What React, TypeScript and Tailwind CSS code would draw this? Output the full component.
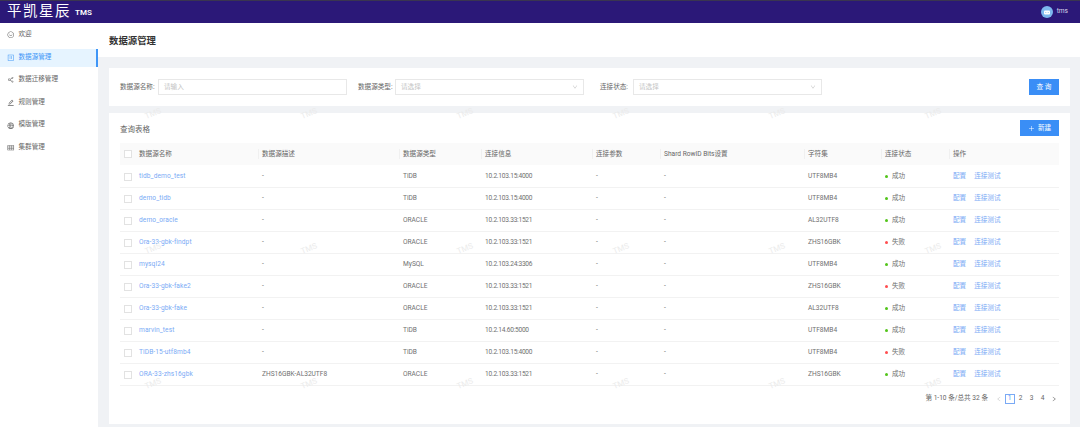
import React from "react";
import {
  AiOutlineSmile,
  AiOutlineProfile,
  AiOutlineEdit,
  AiOutlineGlobal,
  AiOutlineTable,
  AiOutlineDown,
  AiOutlineLeft,
  AiOutlineRight,
  AiOutlinePlus,
  AiOutlineShareAlt,
} from "react-icons/ai";

const font = "font-['Roboto','Noto_Sans_CJK_SC',sans-serif]";

const menu = [
  { label: "欢迎", icon: <AiOutlineSmile /> },
  { label: "数据源管理", icon: <AiOutlineProfile />, active: true },
  { label: "数据迁移管理", icon: <AiOutlineShareAlt /> },
  { label: "规则管理", icon: <AiOutlineEdit /> },
  { label: "模版管理", icon: <AiOutlineGlobal /> },
  { label: "集群管理", icon: <AiOutlineTable /> },
];

const columns = ["数据源名称", "数据源描述", "数据源类型", "连接信息", "连接参数", "Shard RowID Bits设置", "字符集", "连接状态", "操作"];

const rows = [
  ["tidb_demo_test", "-", "TiDB", "10.2.103.15:4000", "UTF8MB4", true],
  ["demo_tidb", "-", "TiDB", "10.2.103.15:4000", "UTF8MB4", true],
  ["demo_oracle", "-", "ORACLE", "10.2.103.33:1521", "AL32UTF8", true],
  ["Ora-33-gbk-findpt", "-", "ORACLE", "10.2.103.33:1521", "ZHS16GBK", false],
  ["mysql24", "-", "MySQL", "10.2.103.24:3306", "UTF8MB4", true],
  ["Ora-33-gbk-fake2", "-", "ORACLE", "10.2.103.33:1521", "ZHS16GBK", false],
  ["Ora-33-gbk-fake", "-", "ORACLE", "10.2.103.33:1521", "AL32UTF8", true],
  ["marvin_test", "-", "TiDB", "10.2.14.60:5000", "UTF8MB4", true],
  ["TiDB-15-utf8mb4", "-", "TiDB", "10.2.103.15:4000", "UTF8MB4", false],
  ["ORA-33-zhs16gbk", "ZHS16GBK-AL32UTF8", "ORACLE", "10.2.103.33:1521", "ZHS16GBK", true],
] as const;

function Checkbox() {
  return <span className="block h-[8px] w-[8px] border border-[#e2e2e2] bg-white" />;
}

function Select({ label, labelWidth }: { label: string; labelWidth: string }) {
  return (
    <div className="flex items-center">
      <span className={`${labelWidth} pt-[1px] text-[6.6px] text-[#666666]`}>{label}</span>
      <div className="flex h-[16px] w-[189px] items-center justify-between border border-[#e8e8e8] px-[5px] text-[6.6px] text-[#c4c4c4]">
        <span className="pt-[1px]">请选择</span>
        <AiOutlineDown className="text-[6px] text-[#c4c4c4]" />
      </div>
    </div>
  );
}

export default function App() {
  return (
    <div className={`${font} relative flex h-[427px] w-[1080px] flex-col overflow-hidden bg-[#f0f2f5]`}>
      <header className="flex h-[23px] shrink-0 items-center justify-between border-t border-[#3a3550] bg-[#2b1878] pl-[7px] pr-[12px] text-white">
        <div className="flex items-center">
          <span className="text-[14.5px] leading-none tracking-[1.5px]">平凯星辰</span>
          <span className="ml-[4px] mt-[1px] text-[8px] font-semibold">TMS</span>
        </div>
        <div className="flex items-center gap-[4px]">
          <svg viewBox="0 0 12 12" className="h-[12px] w-[12px]">
            <circle cx="6" cy="6" r="6" fill="#7db8ee" />
            <rect x="3" y="4.5" width="6" height="4" rx="1" fill="#ffffff" />
            <circle cx="4.8" cy="6.4" r="0.5" fill="#7db8ee" />
            <circle cx="7.2" cy="6.4" r="0.5" fill="#7db8ee" />
          </svg>
          <span className="text-[6.6px] text-[#d8d6e8]">tms</span>
        </div>
      </header>

      <div className="flex min-h-0 flex-1">
        <aside className="w-[98px] shrink-0 bg-white pt-[3px]">
          {menu.map((item) => (
            <div
              key={item.label}
              className={`mb-[4.6px] flex h-[18px] items-center gap-[4px] pl-[7px] text-[6.6px] ${
                item.active ? "border-r-2 border-[#3f96f7] bg-[#e6f4ff] text-[#3f96f7]" : "text-[#666666]"
              }`}
            >
              <span className="text-[7.5px]">{item.icon}</span>
              <span>{item.label}</span>
            </div>
          ))}
        </aside>

        <main className="min-w-0 flex-1">
          <div className="flex h-[34px] items-center bg-white pl-[11px] pt-[2px] text-[9.4px] font-semibold text-[#333333]">数据源管理</div>

          <div className="ml-[11px] mr-[10px] mt-[11px] flex h-[38px] items-center bg-white px-[11px]">
            <div className="flex items-center">
              <span className="w-[38px] pt-[1px] text-[6.6px] text-[#666666]">数据源名称:</span>
              <div className="flex h-[16px] w-[189px] items-center border border-[#e8e8e8] px-[5px] pt-[1px] text-[6.6px] text-[#c4c4c4]">请输入</div>
            </div>
            <div className="ml-[11px]">
              <Select label="数据源类型:" labelWidth="w-[37px]" />
            </div>
            <div className="ml-[16px]">
              <Select label="连接状态:" labelWidth="w-[33px]" />
            </div>
            <button className="ml-auto flex h-[16px] w-[30px] items-center justify-center bg-[#3a8ef6] pt-[1px] text-[6.6px] text-white">查 询</button>
          </div>

          <div className="ml-[11px] mr-[10px] mt-[7px] h-[311px] bg-white px-[11px] pt-[7px]">
            <div className="flex h-[16px] items-center justify-between">
              <span className="pt-[4px] text-[7.5px] text-[#666666]">查询表格</span>
              <button className="flex h-[16px] w-[39px] items-center justify-center gap-[3px] bg-[#3a8ef6] pt-[1px] text-[6.6px] text-white">
                <AiOutlinePlus className="text-[7px]" />
                新建
              </button>
            </div>

            <table className="mt-[7px] w-[939px] table-fixed border-collapse text-left text-[6.6px] text-[#707070]">
              <colgroup>
                <col className="w-[15px]" />
                <col className="w-[123px]" />
                <col className="w-[141px]" />
                <col className="w-[82px]" />
                <col className="w-[111px]" />
                <col className="w-[68px]" />
                <col className="w-[144px]" />
                <col className="w-[77px]" />
                <col className="w-[68px]" />
                <col className="w-[110px]" />
              </colgroup>
              <thead>
                <tr className="h-[22px] bg-[#fafafa]">
                  <th className="pl-[4px] font-normal">
                    <Checkbox />
                  </th>
                  {columns.map((col, i) => (
                    <th key={col} className="relative pl-[4px] pt-[2px] font-normal text-[#666666]">
                      {i > 0 && <span className="absolute left-0 top-[6px] h-[10px] w-px bg-[#f0f0f0]" />}
                      {col}
                    </th>
                  ))}
                  <th />
                </tr>
              </thead>
              <tbody>
                {rows.map(([name, desc, type, conn, charset, ok]) => (
                  <tr key={name} className="h-[22px] border-b border-[#f2f2f2] [&>td]:pt-[2px]">
                    <td className="pl-[4px]">
                      <Checkbox />
                    </td>
                    <td className="pl-[4px] tracking-[0.1px] text-[#7aaaf5]">{name}</td>
                    <td className="pl-[4px]">{desc}</td>
                    <td className="pl-[4px]">{type}</td>
                    <td className="pl-[4px] tracking-[-0.25px]">{conn}</td>
                    <td className="pl-[4px]">-</td>
                    <td className="pl-[4px]">-</td>
                    <td className="pl-[4px]">{charset}</td>
                    <td className="pl-[4px]">
                      <span className="flex items-center gap-[4px]">
                        <span className={`h-[3px] w-[3px] rounded-full ${ok ? "bg-[#52c41a]" : "bg-[#ff4d4f]"}`} />
                        {ok ? "成功" : "失败"}
                      </span>
                    </td>
                    <td className="pl-[4px] text-[#7aaaf5]">
                      <span className="flex gap-[8px]">
                        <span>配置</span>
                        <span>连接测试</span>
                      </span>
                    </td>
                    <td />
                  </tr>
                ))}
              </tbody>
            </table>

            <div className="mt-[7px] flex h-[12px] items-center justify-end text-[6.6px] text-[#666666]">
              <span className="mr-[5px]">第 1-10 条/总共 32 条</span>
              <span className="flex w-[11px] justify-center">
                <AiOutlineLeft className="text-[6px] text-[#c8c8c8]" />
              </span>
              <span className="flex w-[11px] justify-center">
                <span className="flex h-[10px] w-[10px] items-center justify-center border border-[#7aaaf5] text-[#3f96f7]">1</span>
              </span>
              <span className="w-[11px] text-center">2</span>
              <span className="w-[11px] text-center">3</span>
              <span className="w-[11px] text-center">4</span>
              <span className="flex w-[11px] justify-center">
                <AiOutlineRight className="text-[6px]" />
              </span>
            </div>
          </div>
        </main>
      </div>

      {/* 水印 */}
      <div className="pointer-events-none absolute left-[75px] top-[46px] grid grid-cols-[repeat(6,156px)] grid-rows-[repeat(3,135px)] text-[8px] text-[#ebebeb]">
        {Array.from({ length: 18 }).map((_, i) => (
          <span key={i} className="flex items-center justify-center">
            <span className="-rotate-[22deg]">TMS</span>
          </span>
        ))}
      </div>
    </div>
  );
}
